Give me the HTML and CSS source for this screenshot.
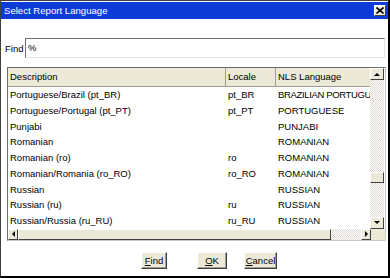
FILE: index.html
```html
<!DOCTYPE html>
<html>
<head>
	<title>Select Report Language</title>
	<link rel="stylesheet" href="styles.css">
</head>
<body>
<div class="dialog">
	<div class="titlebar">
		<span>Select Report Language</span>
		<span class="close">
			<svg width="8" height="7" viewBox="0 0 8 7"><path d="M0.5 0.5 L7.5 6.5 M7.5 0.5 L0.5 6.5" stroke="#000" stroke-width="1.6"/></svg>
		</span>
	</div>
	<div class="find">
		<label>Find</label>
		<div class="input">%</div>
	</div>
	<div class="table">
		<div class="main">
			<div class="view">
				<div class="row head">
					<span class="c1">Description</span>
					<span class="c2">Locale</span>
					<span class="c3">NLS Language</span>
				</div>
				<div class="row"><span class="c1">Portuguese/Brazil (pt_BR)</span><span class="c2">pt_BR</span><span class="c3 fit">BRAZILIAN PORTUGU</span></div>
				<div class="row"><span class="c1">Portuguese/Portugal (pt_PT)</span><span class="c2">pt_PT</span><span class="c3">PORTUGUESE</span></div>
				<div class="row"><span class="c1">Punjabi</span><span class="c2"></span><span class="c3">PUNJABI</span></div>
				<div class="row"><span class="c1">Romanian</span><span class="c2"></span><span class="c3">ROMANIAN</span></div>
				<div class="row"><span class="c1">Romanian (ro)</span><span class="c2">ro</span><span class="c3">ROMANIAN</span></div>
				<div class="row"><span class="c1">Romanian/Romania (ro_RO)</span><span class="c2">ro_RO</span><span class="c3">ROMANIAN</span></div>
				<div class="row"><span class="c1">Russian</span><span class="c2"></span><span class="c3">RUSSIAN</span></div>
				<div class="row"><span class="c1">Russian (ru)</span><span class="c2">ru</span><span class="c3">RUSSIAN</span></div>
				<div class="row"><span class="c1">Russian/Russia (ru_RU)</span><span class="c2">ru_RU</span><span class="c3">RUSSIAN</span></div>
			</div>
			<div class="vscroll">
				<div class="sbtn"><i class="up"></i></div>
				<div class="track vtrack"><div class="vthumb"></div></div>
				<div class="sbtn"><i class="down"></i></div>
			</div>
		</div>
		<div class="hrow">
			<div class="sbtn"><i class="left"></i></div>
			<div class="hthumb"></div>
			<div class="track htrack"></div>
			<div class="sbtn"><i class="right"></i></div>
			<div class="corner"></div>
		</div>
	</div>
	<div class="buttons">
		<button class="btn find-btn"><u>F</u>ind</button>
		<button class="btn ok-btn"><u>O</u>K</button>
		<button class="btn"><u>C</u>ancel</button>
	</div>
</div>
</body>
</html>
```

FILE: styles.css
```css
html, body{
	margin: 0;
	padding: 0;
	background-color: #fff;
}
.dialog{
	width: 390px;
	height: 278px;
	box-sizing: border-box;
	border: 1px solid #404040;
	border-right: 2px solid #000;
	border-bottom: 2px solid #000;
	background-color: #fff;
	font-family: "Liberation Sans", Arial, sans-serif;
	font-size: 9.5px;
	color: #000;
	display: flex;
	flex-direction: column;
}
.titlebar{
	height: 17px;
	margin-top: 1px;
	background-color: #0c3bd7;
	color: #fff;
	display: flex;
	align-items: center;
	justify-content: space-between;
	padding: 0 2px 0 3px;
	font-size: 9.6px;
}
.close{
	width: 12px;
	height: 11px;
	box-sizing: border-box;
	background-color: #ece9d8;
	border: 1px solid;
	border-color: #fff #404040 #404040 #fff;
	display: flex;
	align-items: center;
	justify-content: center;
}
.close svg{
	display: block;
}
.find{
	display: flex;
	align-items: center;
	margin-top: 19px;
	height: 20px;
	padding-left: 4px;
}
.find label{
	width: 20px;
}
.input{
	width: 360px;
	height: 20px;
	box-sizing: border-box;
	border-top: 1px solid #6e6e6e;
	border-left: 1px solid #6e6e6e;
	border-right: 1px solid #e4e4e4;
	border-bottom: 1px solid #e4e4e4;
	padding-left: 2px;
	line-height: 18px;
}
.table{
	margin: 9px 0 0 6px;
	width: 379px;
	box-sizing: border-box;
	border: 1px solid #6e6e6e;
	border-right-color: #c8c8c8;
	border-bottom-color: #c8c8c8;
}
.main{
	display: flex;
}
.view{
	width: 362px;
	overflow: hidden;
}
.row{
	display: flex;
	height: 15.75px;
	line-height: 15.75px;
	white-space: nowrap;
}
.row span{
	overflow: hidden;
	padding-left: 2px;
	box-sizing: border-box;
	flex-shrink: 0;
}
.c1{
	width: 218px;
}
.c2{
	width: 50px;
}
.c3{
	width: 94px;
}
.fit{
	letter-spacing: -0.35px;
}
.row.head{
	height: 18px;
	line-height: 18px;
	background-color: #ece9d8;
	border-bottom: 1px solid #a09e94;
}
.row.head span{
	border-right: 1px solid #a09e94;
}
.row.head .c3{
	border-right: 0;
}
.vscroll{
	width: 14px;
	display: flex;
	flex-direction: column;
}
.sbtn{
	width: 14px;
	height: 12px;
	box-sizing: border-box;
	background-color: #ece9d8;
	border: 1px solid;
	border-color: #fff #404040 #404040 #fff;
	display: flex;
	align-items: center;
	justify-content: center;
	flex-shrink: 0;
}
.track{
	background: repeating-conic-gradient(#fff 0 25%, #dcdad2 0 50%) 0 0/2px 2px;
}
.vtrack{
	flex: 1;
	display: flex;
	flex-direction: column;
	justify-content: flex-end;
	padding-bottom: 34px;
}
.vthumb{
	height: 9px;
	background-color: #ece9d8;
	border: 1px solid;
	border-color: #fff #404040 #404040 #fff;
}
.hrow{
	display: flex;
	height: 11px;
}
.hrow .sbtn{
	width: 10px;
	height: 11px;
}
.hthumb{
	width: 313px;
	background-color: #ece9d8;
	border: 1px solid;
	border-color: #fff #404040 #404040 #fff;
	box-sizing: border-box;
}
.htrack{
	flex: 1;
}
.corner{
	width: 14px;
	background-color: #ece9d8;
}
i{
	display: block;
	width: 0;
	height: 0;
	border: 3px solid transparent;
}
.up{
	border-bottom-color: #000;
	border-top-width: 0;
}
.down{
	border-top-color: #000;
	border-bottom-width: 0;
}
.left{
	border-right-color: #000;
	border-left-width: 0;
}
.right{
	border-left-color: #000;
	border-right-width: 0;
}
.buttons{
	display: flex;
	margin-top: 11px;
	padding-left: 140px;
}
.btn{
	height: 17px;
	padding: 0;
	font-family: "Liberation Sans", Arial, sans-serif;
	font-size: 9.5px;
	color: #000;
	background-color: #ece9d8;
	border: 1px solid;
	border-color: #fff #404040 #404040 #fff;
	box-shadow: inset -1px -1px 0 #a09e94;
	width: 33px;
}
.find-btn{
	width: 26px;
	margin-right: 30px;
}
.ok-btn{
	width: 30px;
	margin-right: 17px;
}
```
